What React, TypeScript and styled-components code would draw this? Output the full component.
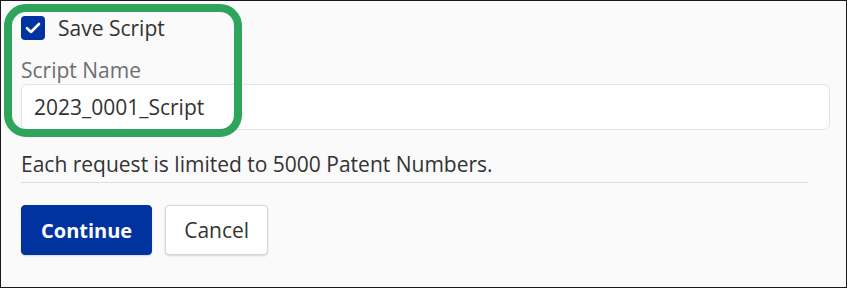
import { createGlobalStyle } from 'styled-components';
import styled from 'styled-components';

const GlobalStyle = createGlobalStyle`
    html, body {
        margin: 0;
        padding: 0;
        background: #fafafa;
    }
    * {
        box-sizing: border-box;
    }
`;

const Frame = styled.div`
    position: relative;
    width: 847px;
    height: 288px;
    border: 1px solid #1a1a1a;
    background: #fafafa;
    font-family: 'Open Sans', 'Noto Sans', sans-serif;
    color: #333;
`;

const Form = styled.div`
    display: flex;
    flex-direction: column;
    padding: 15px 16px 0 20px;
`;

const CheckRow = styled.label`
    display: flex;
    align-items: center;
    gap: 13px;
    height: 24px;
    font-size: 21px;
    color: #333;
`;

const CheckBox = styled.span`
    display: flex;
    align-items: center;
    justify-content: center;
    width: 24px;
    height: 24px;
    border-radius: 4px;
    background: #0033a0;
`;

const FieldLabel = styled.div`
    margin-top: 16px;
    font-size: 21px;
    line-height: 28px;
    color: #6e6e6e;
`;

const TextInput = styled.div`
    width: 809px;
    height: 46px;
    display: flex;
    align-items: center;
    padding: 0 12px;
    background: #fff;
    border: 1px solid #e3e3e3;
    border-radius: 6px;
    font-size: 21px;
    color: #333;
`;

const Note = styled.div`
    margin-top: 20px;
    font-size: 21px;
    line-height: 28px;
    color: #333;
`;

const Divider = styled.hr`
    margin: 4px 0 0;
    width: 787px;
    border: none;
    border-top: 1px solid #dedede;
`;

const ButtonRow = styled.div`
    display: flex;
    gap: 13px;
    margin-top: 22px;
`;

const Button = styled.button<{ $primary?: boolean }>`
    height: 50px;
    padding: 0 ${(p) => (p.$primary ? '19px' : '18px')};
    border-radius: 4px;
    font-family: inherit;
    font-size: ${(p) => (p.$primary ? '20px' : '21px')};
    font-weight: ${(p) => (p.$primary ? 700 : 400)};
    color: ${(p) => (p.$primary ? '#fff' : '#333')};
    background: ${(p) => (p.$primary ? '#0033a0' : '#fff')};
    border: 1px solid ${(p) => (p.$primary ? '#0033a0' : '#d6d6d6')};
    box-shadow: 0 1px 2px rgba(0, 0, 0, 0.15);
`;

const Highlight = styled.div`
    position: absolute;
    left: 3px;
    top: 3px;
    width: 238px;
    height: 133px;
    border: 8px solid #2ea55b;
    border-radius: 22px;
    pointer-events: none;
`;

const App = () => {
    return (
        <>
            <GlobalStyle />
            <Frame>
                <Form>
                    <CheckRow>
                        <CheckBox>
                            <svg width="16" height="12" viewBox="0 0 16 12">
                                <path
                                    d="M2 6.2 L6 10 L14 2"
                                    fill="none"
                                    stroke="#fff"
                                    strokeWidth="2.6"
                                    strokeLinecap="round"
                                    strokeLinejoin="round"
                                />
                            </svg>
                        </CheckBox>
                        Save Script
                    </CheckRow>
                    <FieldLabel>Script Name</FieldLabel>
                    <TextInput>2023_0001_Script</TextInput>
                    <Note>Each request is limited to 5000 Patent Numbers.</Note>
                    <Divider />
                    <ButtonRow>
                        <Button $primary>Continue</Button>
                        <Button>Cancel</Button>
                    </ButtonRow>
                </Form>
                <Highlight />
            </Frame>
        </>
    );
};

export default App;
